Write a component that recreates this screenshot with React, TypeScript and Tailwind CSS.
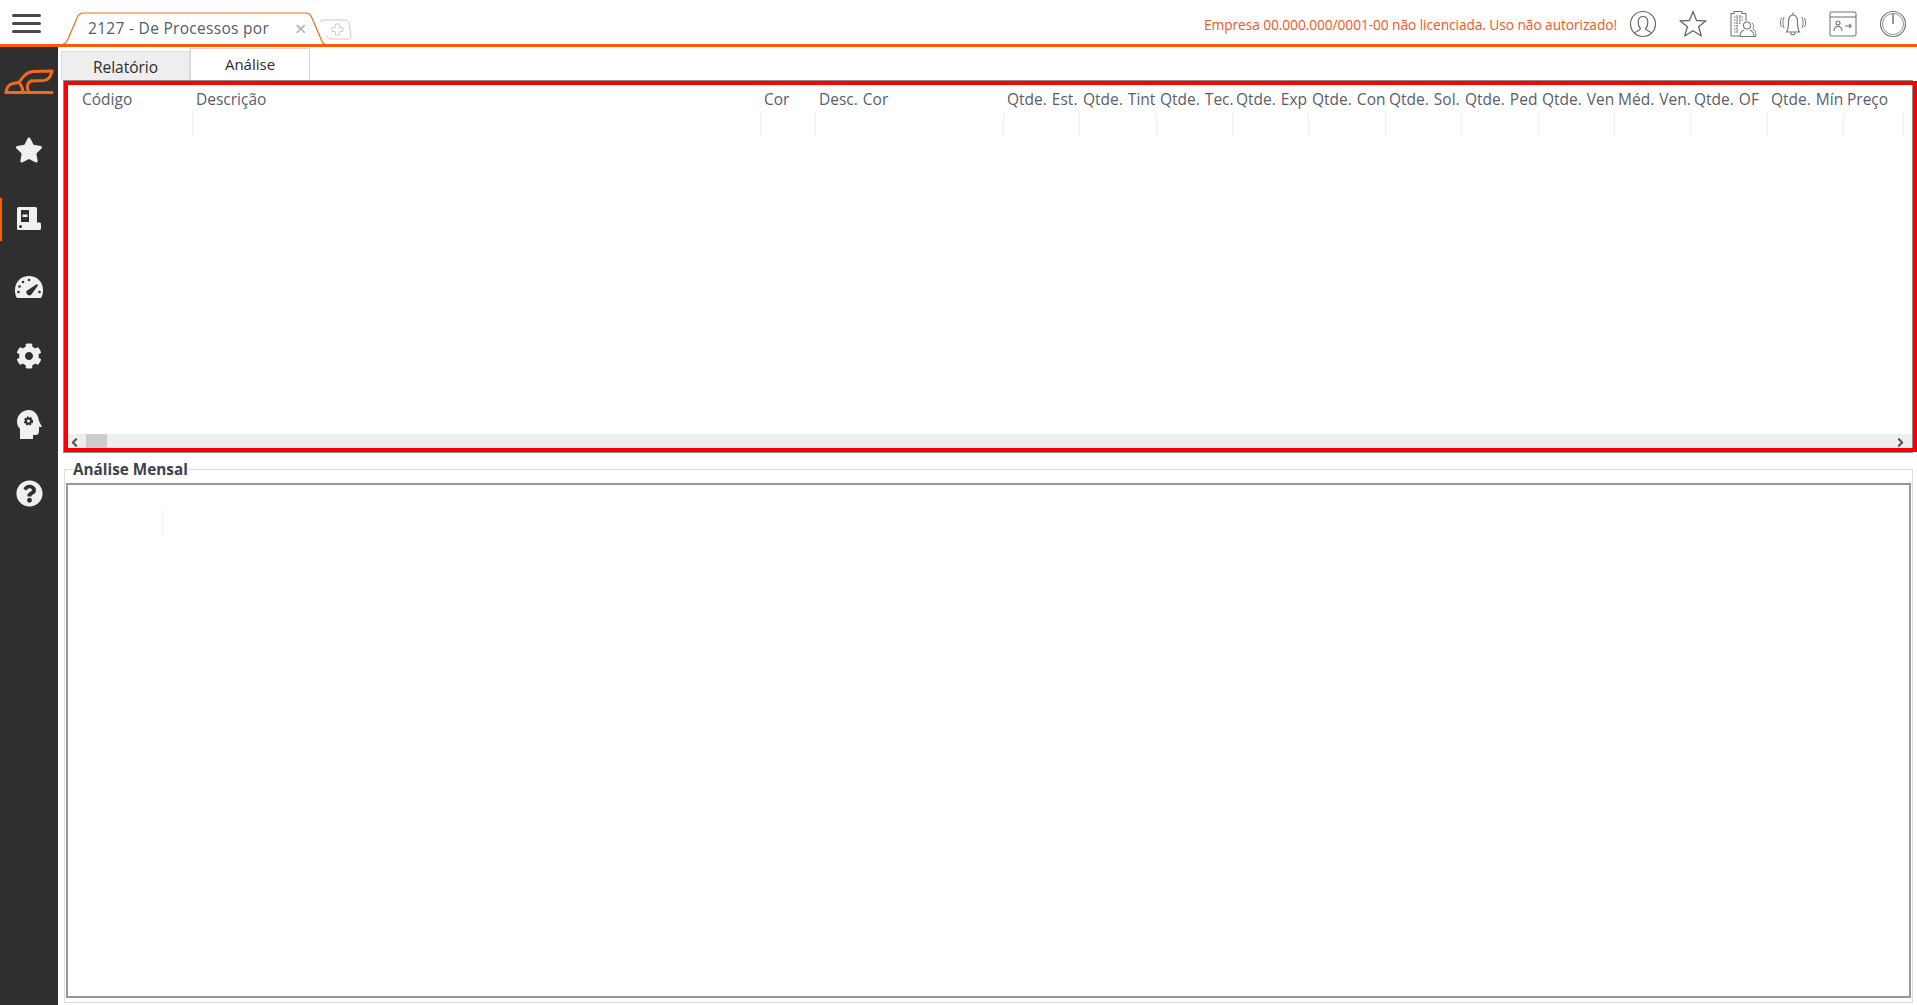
import { ChevronLeft, ChevronRight } from 'lucide-react';
import { FaCog, FaQuestionCircle, FaStar } from 'react-icons/fa';

const columns = [
    { label: 'Código', width: 'w-[114px]' },
    { label: 'Descrição', width: 'w-[568px]' },
    { label: 'Cor', width: 'w-[55px]' },
    { label: 'Desc. Cor', width: 'w-[188px]' },
    { label: 'Qtde. Est.', width: 'w-[76px]' },
    { label: 'Qtde. Tint', width: 'w-[77px]' },
    { label: 'Qtde. Tec.', width: 'w-[76px]' },
    { label: 'Qtde. Exp', width: 'w-[76px]' },
    { label: 'Qtde. Con', width: 'w-[77px]' },
    { label: 'Qtde. Sol.', width: 'w-[76px]' },
    { label: 'Qtde. Ped', width: 'w-[77px]' },
    { label: 'Qtde. Ven', width: 'w-[76px]' },
    { label: 'Méd. Ven.', width: 'w-[76px]' },
    { label: 'Qtde. OF', width: 'w-[77px]' },
    { label: 'Qtde. Mín', width: 'w-[76px]' },
    { label: 'Preço', width: 'w-[60px]' },
];

function Logo() {
    return (
        <svg width="50" height="26" viewBox="0 0 50 26" fill="none" stroke="#f26a1b" strokeWidth="3" strokeLinejoin="round" strokeLinecap="round">
            <path d="M2 23 C3 18 5 15 9 14.500 L15 13.500 C18 9 22 3 29 2.500 L48 2 C47 7 44 11 40 11.500 L27 12" />
            <path d="M2 23.500 H48" />
            <path d="M15 13.500 C17 16 19 19 19 23" />
            <path d="M27 12 C23 14 22 19 25 23" />
        </svg>
    );
}

function BookIcon() {
    return (
        <svg width="24" height="23" viewBox="0 0 24 23" fill="#eef0f1">
            <path d="M0 1.500 A1.500 1.500 0 0 1 1.500 0 H18.500 A1.500 1.500 0 0 1 20 1.500 V15.500 H22.500 A1.500 1.500 0 0 1 24 17 V21.500 A1.500 1.500 0 0 1 22.500 23 H1.500 A1.500 1.500 0 0 1 0 21.500 Z" />
            <rect x="4" y="3" width="8" height="12" fill="#2f2f2f" />
            <rect x="5.500" y="7.500" width="5" height="2.500" fill="#eef0f1" />
            <circle cx="3.500" cy="19.500" r="1.500" fill="#2f2f2f" />
        </svg>
    );
}

function GaugeIcon() {
    return (
        <svg width="30" height="24" viewBox="0 0 30 24" fill="#eef0f1">
            <path d="M15 1 C7 1 1 7 1 15 C1 18 1.500 21 3 23 H27 C28.500 21 29 18 29 15 C29 7 23 1 15 1 Z" />
            <g fill="#2f2f2f">
                <circle cx="15" cy="5" r="1.300" />
                <circle cx="9" cy="7" r="1.300" />
                <circle cx="5.500" cy="11.500" r="1.300" />
                <circle cx="4.500" cy="17" r="1.300" />
                <circle cx="25.500" cy="17" r="1.300" />
                <path d="M12.500 16 L23 9 L24 10.500 L17 20 A3.200 3.200 0 0 1 12.500 16 Z" />
            </g>
        </svg>
    );
}

function HeadIcon() {
    return (
        <svg width="25" height="29" viewBox="0 0 25 29" fill="#eef0f1">
            <path d="M12 0 C5 0 0 5 0 12 C0 15 1.500 17 3 19 V29 H16 V25 H19 C21 25 22 23 22 21 V17 H25 L22 11 C21 4 17 0 12 0 Z" />
            <circle cx="11.500" cy="11" r="3.600" fill="#2f2f2f" stroke="#2f2f2f" strokeWidth="2" strokeDasharray="1.800 1.200" />
            <circle cx="11.500" cy="11" r="1.600" fill="#eef0f1" />
        </svg>
    );
}

function UserIcon() {
    return (
        <svg width="28" height="28" viewBox="0 0 28 28" fill="none" stroke="#666" strokeWidth="1.200">
            <circle cx="14" cy="14" r="12.500" />
            <path d="M5.500 23 C7 21 11.500 20.500 11.500 18.500 C9.500 16.500 9 14 9.300 11 C9.700 8 12 6.500 14 6.500 C16 6.500 18.300 8 18.700 11 C19 14 18.500 16.500 16.500 18.500 C16.500 20.500 21 21 22.500 23" />
        </svg>
    );
}

function StarIcon() {
    return (
        <svg width="28" height="28" viewBox="0 0 28 28" fill="none" stroke="#666" strokeWidth="1.300" strokeLinejoin="round">
            <path d="M14 1.500 L17.500 10.500 L27 10.800 L19.600 16.800 L22.300 26 L14 20.700 L5.700 26 L8.400 16.800 L1 10.800 L10.500 10.500 Z" />
        </svg>
    );
}

function CompanyIcon() {
    return (
        <svg width="28" height="28" viewBox="0 0 28 28" fill="none" stroke="#777" strokeWidth="1.100">
            <path d="M2 26 V3.500 H5 V1.500 H13 V3.500 H17 V11" />
            <path d="M2 26 H11" />
            <path d="M5 7 H14 M5 10 H14 M5 13 H11 M5 16 H9 M5 19 H9 M5 22 H9 M8 5 V23 M11 5 V14" strokeWidth="1" strokeDasharray="1.500 1" />
            <circle cx="18" cy="15.500" r="3.500" />
            <path d="M11 26 C11 22 13 21 15 20 M25 26 C25 22 23 21 21 20 M11 26.500 H27" />
            <path d="M23 13 C25 15 25 17 24 19 C26 20 27 22 27 26" strokeWidth="0.900" />
        </svg>
    );
}

function BellIcon() {
    return (
        <svg width="30" height="26" viewBox="0 0 30 26" fill="none" stroke="#777" strokeWidth="1.200">
            <path d="M8.500 21 C10 19 10.500 16 10.500 11 C10.500 7 12 4 15 4 C18 4 19.500 7 19.500 11 C19.500 16 20 19 21.500 21 Z" />
            <path d="M15 1.500 V4 M13 21.500 C13 24.500 17 24.500 17 21.500" />
            <path d="M6 6 C4.500 9.500 4.500 13.500 6 17 M3.500 7 C2 10 2 13 3.500 16" strokeWidth="1" />
            <path d="M24 6 C25.500 9.500 25.500 13.500 24 17 M26.500 7 C28 10 28 13 26.500 16" strokeWidth="1" />
        </svg>
    );
}

function ExitCardIcon() {
    return (
        <svg width="28" height="26" viewBox="0 0 28 26" fill="none" stroke="#777" strokeWidth="1.100">
            <rect x="1" y="1" width="26" height="24" rx="1.500" />
            <path d="M1 6 H27" />
            <circle cx="9" cy="12" r="2" />
            <path d="M5 20 C5 16.500 7 15.500 9 15.500 C11 15.500 13 16.500 13 20" />
            <path d="M16 15 H22 M20 12.800 L22.300 15 L20 17.200" />
        </svg>
    );
}

function PowerIcon() {
    return (
        <svg width="28" height="28" viewBox="0 0 28 28" fill="none" stroke="#777" strokeWidth="1.200">
            <circle cx="14" cy="14" r="12.500" />
            <circle cx="14" cy="14" r="10.500" strokeWidth="0.800" />
            <path d="M14 4 V14" strokeWidth="1.500" />
        </svg>
    );
}

function TabOutline() {
    return (
        <svg className="absolute left-0 top-0" width="295" height="33" viewBox="0 0 295 33" fill="none">
            <path d="M0.500 32 C4 32 5 29 6 27 L15 6 C16 3 18 1 22 1 L243 1 C247 1 249 3 250 6 L259 27 C260 30 261 32 263 32" stroke="#f26a1b" strokeWidth="1.200" />
            <path d="M258 10 C259 8 260 8 262 8 L282 8 C285 8 286 9 287 11 L289 24 C289.500 26 288 27 286 27 L269 27 C267 27 266 26 265 24" stroke="#c9c9c9" strokeWidth="1" />
            <path d="M273.500 12 H277.500 V15.500 H281 V19.500 H277.500 V23 H273.500 V19.500 H270 V15.500 H273.500 Z" stroke="#cfcfcf" strokeWidth="1" />
        </svg>
    );
}

export default function App() {
    return (
        <div className="h-[1005px] w-[1917px] overflow-hidden bg-white font-['Open_Sans',sans-serif] flex flex-col">
            <header className="h-[47px] shrink-0 flex items-start border-b-[3px] border-[#fc5a03]">
                <div className="w-[62px] pl-[12px] pt-[14px] flex flex-col gap-[5px] shrink-0">
                    <span className="block w-[29px] h-[3px] rounded-sm bg-[#4a4a4a]" />
                    <span className="block w-[29px] h-[3px] rounded-sm bg-[#4a4a4a]" />
                    <span className="block w-[29px] h-[3px] rounded-sm bg-[#4a4a4a]" />
                </div>
                <div className="relative mt-[12px] h-[33px] w-[295px] shrink-0">
                    <TabOutline />
                    <div className="relative flex h-[34px] items-center pl-[26px] text-[15.500px] text-[#555c66]">
                        <span className="w-[207px] whitespace-nowrap tracking-[0.300px]">2127 - De Processos por</span>
                        <span className="text-[20px] leading-none text-[#a8a8a8]">×</span>
                    </div>
                </div>
                <div className="ml-auto flex h-[44px] items-center pt-[3px] pr-[10px]">
                    <span className="mr-[12px] mt-[3px] whitespace-nowrap text-[13.800px] text-[#f4581c] tracking-[-0.100px]">
                        Empresa 00.000.000/0001-00 não licenciada. Uso não autorizado!
                    </span>
                    <div className="flex w-[28px] justify-center"><UserIcon /></div>
                    <div className="ml-[22px] flex w-[28px] justify-center"><StarIcon /></div>
                    <div className="ml-[22px] flex w-[28px] justify-center"><CompanyIcon /></div>
                    <div className="ml-[21px] flex w-[30px] justify-center"><BellIcon /></div>
                    <div className="ml-[21px] flex w-[28px] justify-center"><ExitCardIcon /></div>
                    <div className="ml-[22px] flex w-[28px] justify-center"><PowerIcon /></div>
                </div>
            </header>

            <div className="flex flex-1 min-h-0">
                <aside className="w-[58px] shrink-0 bg-[#2f2f2f] flex flex-col items-center">
                    <div className="mt-[22px] h-[26px]"><Logo /></div>
                    <nav className="mt-[21px] flex flex-col items-center">
                        <div className="flex h-[68.600px] w-[58px] items-center justify-center text-[#eef0f1]"><FaStar size={28} /></div>
                        <div className="relative flex h-[68.600px] w-[58px] items-center justify-center">
                            <span className="absolute left-0 top-[13px] h-[43px] w-[2px] bg-[#fc5a03]" />
                            <BookIcon />
                        </div>
                        <div className="flex h-[68.600px] w-[58px] items-center justify-center"><GaugeIcon /></div>
                        <div className="flex h-[68.600px] w-[58px] items-center justify-center text-[#eef0f1]"><FaCog size={26} /></div>
                        <div className="flex h-[68.600px] w-[58px] items-center justify-center"><HeadIcon /></div>
                        <div className="flex h-[68.600px] w-[58px] items-center justify-center text-[#eef0f1]"><FaQuestionCircle size={27} /></div>
                    </nav>
                </aside>

                <main className="flex-1 min-w-0 flex flex-col">
                    <div className="h-[33px] shrink-0 flex items-end pl-[3px]">
                        <div className="h-[29px] w-[129px] flex items-center justify-center bg-[#eeeeee] border border-b-0 border-[#dcdcdc] text-[15.500px] text-[#2c2c2c] pt-[3px]">Relatório</div>
                        <div className="h-[32px] w-[120px] flex items-center justify-center bg-white border border-b-0 border-[#d8d8d8] text-[15px] text-[#2c2c2c]">Análise</div>
                    </div>

                    <section className="relative ml-[5px] mr-[4px] h-[373px] shrink-0 border border-[#8a8a8a] pt-[4px] flex flex-col">
                        <div className="flex-1 min-h-0 pl-[15px] overflow-hidden">
                            <div className="flex">
                                {columns.map((col) => (
                                    <div key={col.label} className={`${col.width} shrink-0`}>
                                        <div className="h-[28px] whitespace-nowrap pl-[3px] text-[15.500px] leading-[28px] text-[#5a6068] [word-spacing:1px]">{col.label}</div>
                                        <div className="h-[23px] border-r border-[#eeeeee]" />
                                    </div>
                                ))}
                            </div>
                        </div>
                        <div className="ml-[4px] h-[18px] shrink-0 flex items-start bg-[#eeeeee] pr-[5px] pb-[4px]">
                            <ChevronLeft size={13} strokeWidth={4} className="mt-[2px] text-[#555]" />
                            <span className="ml-[5px] h-[14px] w-[21px] bg-[#cccccc]" />
                            <ChevronRight size={13} strokeWidth={4} className="ml-auto mt-[2px] text-[#555]" />
                        </div>
                        <span className="absolute inset-y-0 left-0 -right-[5px] border-4 border-[#ff0000]" />
                    </section>

                    <section className="relative ml-[6px] mr-[4px] mt-[16px] h-[534px] shrink-0 border border-[#dddddd] pl-[1px] pr-[1px] pt-[13px] pb-[4px]">
                        <span className="absolute -top-[11px] left-[7px] bg-white px-[1px] text-[15.300px] font-bold leading-[20px] text-[#3d424c]">Análise Mensal</span>
                        <div className="h-full border-2 border-[#999999] pl-[94px] pt-[26px]">
                            <div className="h-[24px] border-l border-[#eeeeee]" />
                        </div>
                    </section>
                </main>
            </div>
        </div>
    );
}
